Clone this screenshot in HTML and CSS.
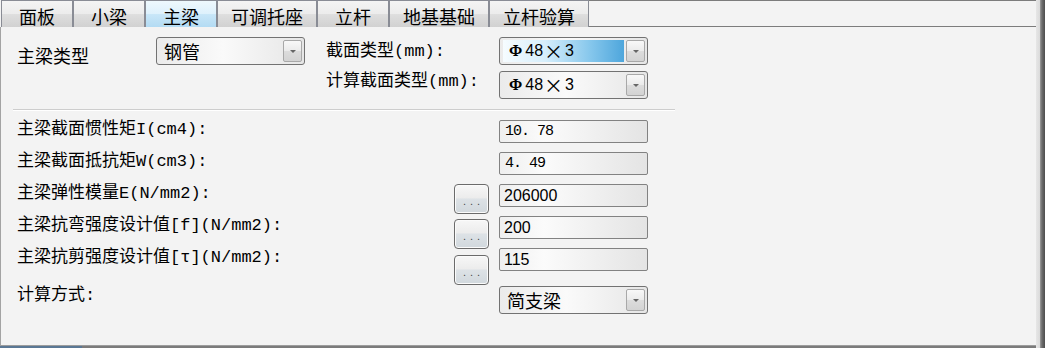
FILE: index.html
```html
<!DOCTYPE html>
<html lang="zh-CN">
<head>
<meta charset="utf-8">
<title>主梁</title>
<link rel="stylesheet" href="styles.css">
</head>
<body>
<div class="frame">
  <div class="main">
    <div class="tabstrip">
      <div class="tab w2">面板</div>
      <div class="tab w2">小梁</div>
      <div class="tab w2 active">主梁</div>
      <div class="tab w4">可调托座</div>
      <div class="tab w2">立杆</div>
      <div class="tab w4">地基基础</div>
      <div class="tab w4">立杆验算</div>
      <div class="tab-fill"></div>
    </div>
    <div class="panel">
      <div class="top-form">
        <div class="lbl-main">主梁类型</div>
        <div class="combo c-type"><div class="val">钢管</div><div class="dd"></div></div>
        <div class="lbl l-sec1">截面类型(mm):</div>
        <div class="combo focus c-sec1"><div class="val phi"><b class="phi-sym">Φ</b>48<span class="times">×</span>3</div><div class="dd"></div></div>
        <div class="lbl l-sec2">计算截面类型(mm):</div>
        <div class="combo c-sec2"><div class="val phi"><b class="phi-sym">Φ</b>48<span class="times">×</span>3</div><div class="dd"></div></div>
      </div>
      <div class="sep"></div>
      <div class="rows">
        <div class="row">
          <div class="lbl">主梁截面惯性矩I(cm4):</div>
          <div class="tb mono">10. 78</div>
        </div>
        <div class="row">
          <div class="lbl">主梁截面抵抗矩W(cm3):</div>
          <div class="tb mono">4. 49</div>
        </div>
        <div class="row">
          <div class="lbl">主梁弹性模量E(N/mm2):</div>
          <div class="dots">...</div>
          <div class="tb">206000</div>
        </div>
        <div class="row">
          <div class="lbl">主梁抗弯强度设计值[f](N/mm2):</div>
          <div class="dots off3">...</div>
          <div class="tb">200</div>
        </div>
        <div class="row">
          <div class="lbl">主梁抗剪强度设计值[τ](N/mm2):</div>
          <div class="dots off7">...</div>
          <div class="tb">115</div>
        </div>
        <div class="row row-last">
          <div class="lbl">计算方式:</div>
          <div class="combo c-calc"><div class="val">简支梁</div><div class="dd"></div></div>
        </div>
      </div>
    </div>
    <div class="statusline"></div>
  </div>
  <div class="edge"></div>
</div>
</body>
</html>
```

FILE: styles.css
```css
* {
  box-sizing: border-box;
  margin: 0;
  padding: 0;
}

html,
body {
  width: 1045px;
  height: 348px;
  overflow: hidden;
  background: #f3f3f3;
}

body {
  font-family: "Noto Sans CJK SC", sans-serif;
  color: #000;
}

.frame {
  display: flex;
  height: 348px;
}

.main {
  width: 1036px;
  display: flex;
  flex-direction: column;
}

.edge {
  width: 9px;
  background: linear-gradient(to right, #e6e6e6 0, #dadada 4px, #9c9c9c 4px, #6c6c6c 6px, #4e4e4e 9px);
}

/* ---------- tabs ---------- */
.tabstrip {
  display: flex;
  height: 27px;
  padding-left: 1px;
}

.tab {
  height: 27px;
  border: 1px solid #898c95;
  border-bottom: none;
  display: flex;
  align-items: center;
  justify-content: center;
  padding-top: 3px;
  font-size: 18px;
  line-height: 20px;
  background: linear-gradient(to bottom, #f4f4f4 0%, #ececec 48%, #dedede 52%, #d1d1d1 100%);
}

.tab.w2 {
  width: 72px;
}

.tab.w4 {
  width: 100px;
}

.tab.active {
  background: linear-gradient(to bottom, #eef8fd 0%, #def1fc 48%, #c8e6f8 52%, #b3dbf3 100%);
}

.tab-fill {
  flex: 1;
  border-top: 1px solid #7c7c7c;
  border-bottom: 1px solid #7c7c7c;
}

/* ---------- panel ---------- */
.panel {
  flex: 1;
  border-left: 1px solid #a3a3a3;
  border-bottom: 1px solid #9c9c9c;
  padding: 10px 0 0 16px;
}

.top-form {
  display: grid;
  grid-template-columns: 139px 149px 21px 173px 149px;
  grid-template-rows: 28px 28px;
  row-gap: 6px;
}

.lbl-main {
  grid-column: 1;
  grid-row: 1;
  align-self: start;
  margin-top: 8px;
  font-size: 18px;
  line-height: 20px;
}

.lbl {
  font-family: "Liberation Mono", "Noto Sans CJK SC", monospace;
  font-size: 17px;
  line-height: 20px;
  white-space: nowrap;
  align-self: start;
}

.l-sec1 {
  grid-column: 4;
  grid-row: 1;
  margin-top: 5px;
}

.l-sec2 {
  grid-column: 4;
  grid-row: 2;
  margin-top: 1px;
}

.c-type {
  grid-column: 2;
  grid-row: 1;
}

.c-sec1 {
  grid-column: 5;
  grid-row: 1;
}

.c-sec2 {
  grid-column: 5;
  grid-row: 2;
}

/* ---------- combo box ---------- */
.combo {
  display: flex;
  align-items: center;
  gap: 2px;
  height: 28px;
  padding: 0 2px 0 3px;
  border: 1px solid #727272;
  border-radius: 3px;
  background: linear-gradient(to right, #ebebeb 0%, #fafafa 45%, #e6e6e6 100%);
}

.combo .val {
  flex: 1;
  height: 22px;
  display: flex;
  align-items: center;
  padding-left: 4px;
  font-size: 18px;
  line-height: 22px;
  white-space: nowrap;
}

.combo.focus .val {
  background: linear-gradient(to right, #f6fcff 0%, #d6eefb 35%, #86c7ec 72%, #4ea6dc 100%);
}

.combo .val.phi {
  padding-left: 6px;
  font-family: "Liberation Sans", sans-serif;
  font-size: 16px;
}

.phi-sym {
  font-family: "Liberation Serif", serif;
  font-weight: bold;
  font-size: 16px;
  margin-right: 3px;
}

.times {
  font-family: "Noto Sans CJK SC", sans-serif;
  font-size: 19px;
  margin: 0 2px 0 1px;
}

.dd {
  width: 19px;
  height: 22px;
  border: 1px solid #a8a8a8;
  border-radius: 2px;
  background: linear-gradient(to bottom, #f8f8f8 0%, #ebebeb 48%, #dcdcdc 52%, #d3d3d3 100%);
  display: flex;
  align-items: center;
  justify-content: center;
}

.dd::after {
  content: "";
  border-left: 3px solid transparent;
  border-right: 3px solid transparent;
  border-top: 3px solid #666;
}

/* ---------- separator ---------- */
.sep {
  margin: 10px 0 0 -4px;
  width: 662px;
  height: 2px;
  border-top: 1px solid #cdcdcd;
  border-bottom: 1px solid #ffffff;
}

/* ---------- value rows ---------- */
.rows {
  margin-top: 9px;
  display: flex;
  flex-direction: column;
  gap: 9px;
}

.row {
  display: grid;
  grid-template-columns: 437px 35px 10px 149px;
  height: 23px;
  align-items: start;
}

.row .lbl {
  grid-column: 1;
}

.row-last {
  height: 28px;
  margin-top: 6px;
}

.row-last .combo {
  grid-column: 4;
}

.tb {
  grid-column: 4;
  height: 23px;
  display: flex;
  align-items: center;
  padding-left: 4px;
  border: 1px solid #828282;
  border-radius: 2px;
  background: linear-gradient(to right, #efefef 0%, #fbfbfb 30%, #e4e4e4 100%);
  font-family: "Liberation Sans", sans-serif;
  font-size: 16px;
  line-height: 20px;
}

.tb.mono {
  font-family: "Liberation Mono", monospace;
  font-size: 15px;
  letter-spacing: -1px;
  padding-left: 5px;
}

.dots {
  grid-column: 2;
  width: 35px;
  height: 30px;
  border: 1px solid #6b6b6b;
  border-radius: 4px;
  box-shadow: inset 0 0 0 1px #fbfbfb;
  background: linear-gradient(to bottom, #f7f7f7 0%, #ececec 46%, #dde2e6 50%, #d1d8dd 100%);
  display: flex;
  align-items: flex-end;
  justify-content: center;
  padding: 0 0 7px 4px;
  font-family: "Liberation Sans", sans-serif;
  font-size: 11px;
  line-height: 10px;
  letter-spacing: 4px;
  color: #4a4a4a;
}

.dots.off3 {
  margin-top: 3px;
}

.dots.off7 {
  margin-top: 7px;
}

.statusline {
  height: 2px;
  background: linear-gradient(to right, #5a7794 0, #5a7794 82px, #7b7b7b 82px, #7b7b7b 100%);
}
```
